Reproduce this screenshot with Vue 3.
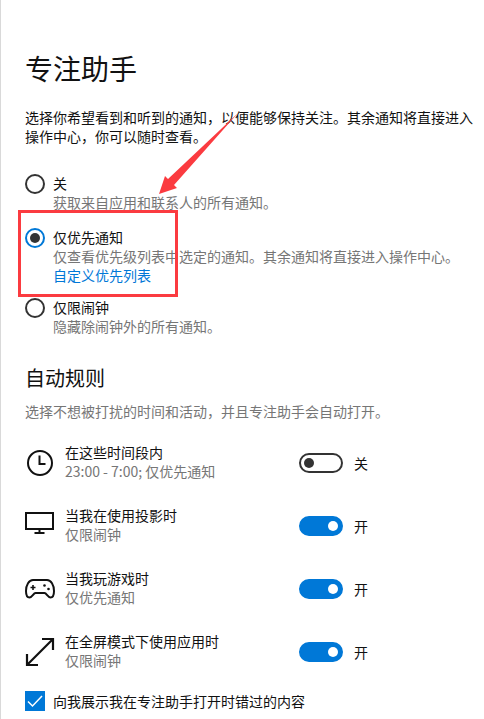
<script setup>
const options = [
  { label: '关', desc: '获取来自应用和联系人的所有通知。', checked: false },
  { label: '仅优先通知', desc: '仅查看优先级列表中选定的通知。其余通知将直接进入操作中心。', checked: true, link: '自定义优先列表' },
  { label: '仅限闹钟', desc: '隐藏除闹钟外的所有通知。', checked: false }
]
const rules = [
  { icon: 'clock', title: '在这些时间段内', sub: '23:00 - 7:00; 仅优先通知', on: false },
  { icon: 'monitor', title: '当我在使用投影时', sub: '仅限闹钟', on: true },
  { icon: 'game', title: '当我玩游戏时', sub: '仅优先通知', on: true },
  { icon: 'full', title: '在全屏模式下使用应用时', sub: '仅限闹钟', on: true }
]
</script>

<template>
  <div class="page">
    <h1 class="title">专注助手</h1>
    <p class="intro">选择你希望看到和听到的通知，以便能够保持关注。其余通知将直接进入操作中心，你可以随时查看。</p>

    <div class="options">
      <div v-for="o in options" :key="o.label" class="option" :class="{ 'with-link': o.link }">
        <span class="radio" :class="{ checked: o.checked }"></span>
        <div class="option-text">
          <div class="line">{{ o.label }}</div>
          <div class="line muted">{{ o.desc }}</div>
          <div v-if="o.link" class="line link">{{ o.link }}</div>
        </div>
      </div>
    </div>

    <h2 class="subtitle">自动规则</h2>
    <p class="sub-intro">选择不想被打扰的时间和活动，并且专注助手会自动打开。</p>

    <div class="rules">
      <div v-for="r in rules" :key="r.title" class="rule">
        <div class="rule-icon">
          <svg v-if="r.icon === 'clock'" width="30" height="30" viewBox="0 0 30 30" fill="none" stroke="#111" stroke-width="2">
            <circle cx="15" cy="15" r="12" />
            <path d="M14.5 7.5V16H20.5" />
          </svg>
          <svg v-else-if="r.icon === 'monitor'" width="30" height="30" viewBox="0 0 30 30" fill="none" stroke="#111" stroke-width="2">
            <rect x="1" y="2" width="27" height="16" />
            <path d="M14.5 18V22M9.5 22H19.5" />
          </svg>
          <svg v-else-if="r.icon === 'game'" width="30" height="30" viewBox="0 0 30 30" fill="none" stroke="#111" stroke-width="2">
            <path d="M8 6H22C26 6 29 11 29 17C29 21 28 23.5 25.5 23.5C23 23.5 21.5 19 19.5 19H10.5C8.5 19 7 23.5 4.5 23.5C2 23.5 1 21 1 17C1 11 4 6 8 6Z" stroke-linejoin="round" />
            <path d="M5.5 13.5H10.5M8 11V16" stroke-width="1.6" />
            <circle cx="19.5" cy="11.5" r="1.3" fill="#111" stroke="none" />
            <circle cx="23.5" cy="15" r="1.3" fill="#111" stroke="none" />
          </svg>
          <svg v-else width="30" height="30" viewBox="0 0 30 30" fill="none" stroke="#111" stroke-width="2.2">
            <path d="M2 28L28 2M17 2H28V13M2 17V28H13" />
          </svg>
        </div>
        <div class="rule-text">
          <div class="line">{{ r.title }}</div>
          <div class="line muted">{{ r.sub }}</div>
        </div>
        <div class="toggle-wrap">
          <span class="toggle" :class="{ on: r.on }"><span class="knob"></span></span>
          <span class="toggle-label">{{ r.on ? '开' : '关' }}</span>
        </div>
      </div>
    </div>

    <div class="check-row">
      <span class="checkbox">
        <svg width="20" height="20" viewBox="0 0 20 20" fill="none" stroke="#fff" stroke-width="1.5">
          <path d="M3 10.5L7.5 15L17 5" />
        </svg>
      </span>
      <span class="line">向我展示我在专注助手打开时错过的内容</span>
    </div>

    <div class="red-box"></div>
    <svg class="arrow" width="100" height="90" viewBox="0 0 100 90">
      <path d="M98 3L34 75L37 78L19 84L25 66L28 69Z" fill="#fb3b40" />
    </svg>
  </div>
</template>

<style scoped>
.page {
  position: relative;
  width: 484px;
  height: 719px;
  box-sizing: border-box;
  padding: 49px 0 0 24px;
  overflow: hidden;
  background: #fff;
  border-left: 1px solid #d9d9d9;
  font-family: "Noto Sans CJK SC", "Liberation Sans", sans-serif;
  font-size: 14px;
  color: #111;
}
.title {
  margin: 0;
  font-size: 28px;
  font-weight: 400;
  line-height: 38px;
}
.intro {
  margin: 21px 0 0;
  width: 452px;
  line-height: 19px;
}
.options {
  margin-top: 28px;
  display: flex;
  flex-direction: column;
}
.option {
  display: flex;
  gap: 8px;
}
.option + .option {
  margin-top: 16px;
}
.option.with-link + .option {
  margin-top: 13px;
}
.radio {
  flex: none;
  width: 20px;
  height: 20px;
  box-sizing: border-box;
  border: 2px solid #333;
  border-radius: 50%;
  position: relative;
}
.radio.checked {
  border-color: #0078d7;
}
.radio.checked::after {
  content: "";
  position: absolute;
  left: 3px;
  top: 3px;
  width: 10px;
  height: 10px;
  border-radius: 50%;
  background: #333;
}
.line {
  line-height: 19px;
  white-space: nowrap;
}
.muted {
  color: #767676;
}
.link {
  color: #0078d7;
}
.subtitle {
  margin: 28px 0 0;
  font-size: 20px;
  font-weight: 400;
  line-height: 28px;
}
.sub-intro {
  margin: 10px 0 0;
  color: #767676;
  line-height: 19px;
}
.rules {
  margin-top: 23px;
  display: flex;
  flex-direction: column;
  gap: 25px;
}
.rule {
  display: flex;
  align-items: center;
  height: 38px;
}
.rule-icon {
  flex: none;
  width: 40px;
  display: flex;
  align-items: center;
}
.rule-text {
  width: 234px;
  margin-bottom: 2px;
}
.toggle-wrap {
  display: flex;
  align-items: center;
  gap: 11px;
}
.toggle {
  width: 44px;
  height: 20px;
  box-sizing: border-box;
  border: 2px solid #333;
  border-radius: 10px;
  display: flex;
  align-items: center;
  padding: 0 3px;
}
.toggle .knob {
  width: 10px;
  height: 10px;
  border-radius: 50%;
  background: #333;
}
.toggle.on {
  background: #0078d7;
  border-color: #0078d7;
  justify-content: flex-end;
}
.toggle.on .knob {
  background: #fff;
}
.check-row {
  margin-top: 20px;
  display: flex;
  align-items: center;
  gap: 8px;
}
.checkbox {
  width: 20px;
  height: 20px;
  background: #0078d7;
  display: block;
}
.checkbox svg {
  display: block;
}
.red-box {
  position: absolute;
  left: 17px;
  top: 210px;
  width: 160px;
  height: 87px;
  box-sizing: border-box;
  border: 3px solid #fb3b40;
}
.arrow {
  position: absolute;
  left: 139px;
  top: 110px;
}
</style>
